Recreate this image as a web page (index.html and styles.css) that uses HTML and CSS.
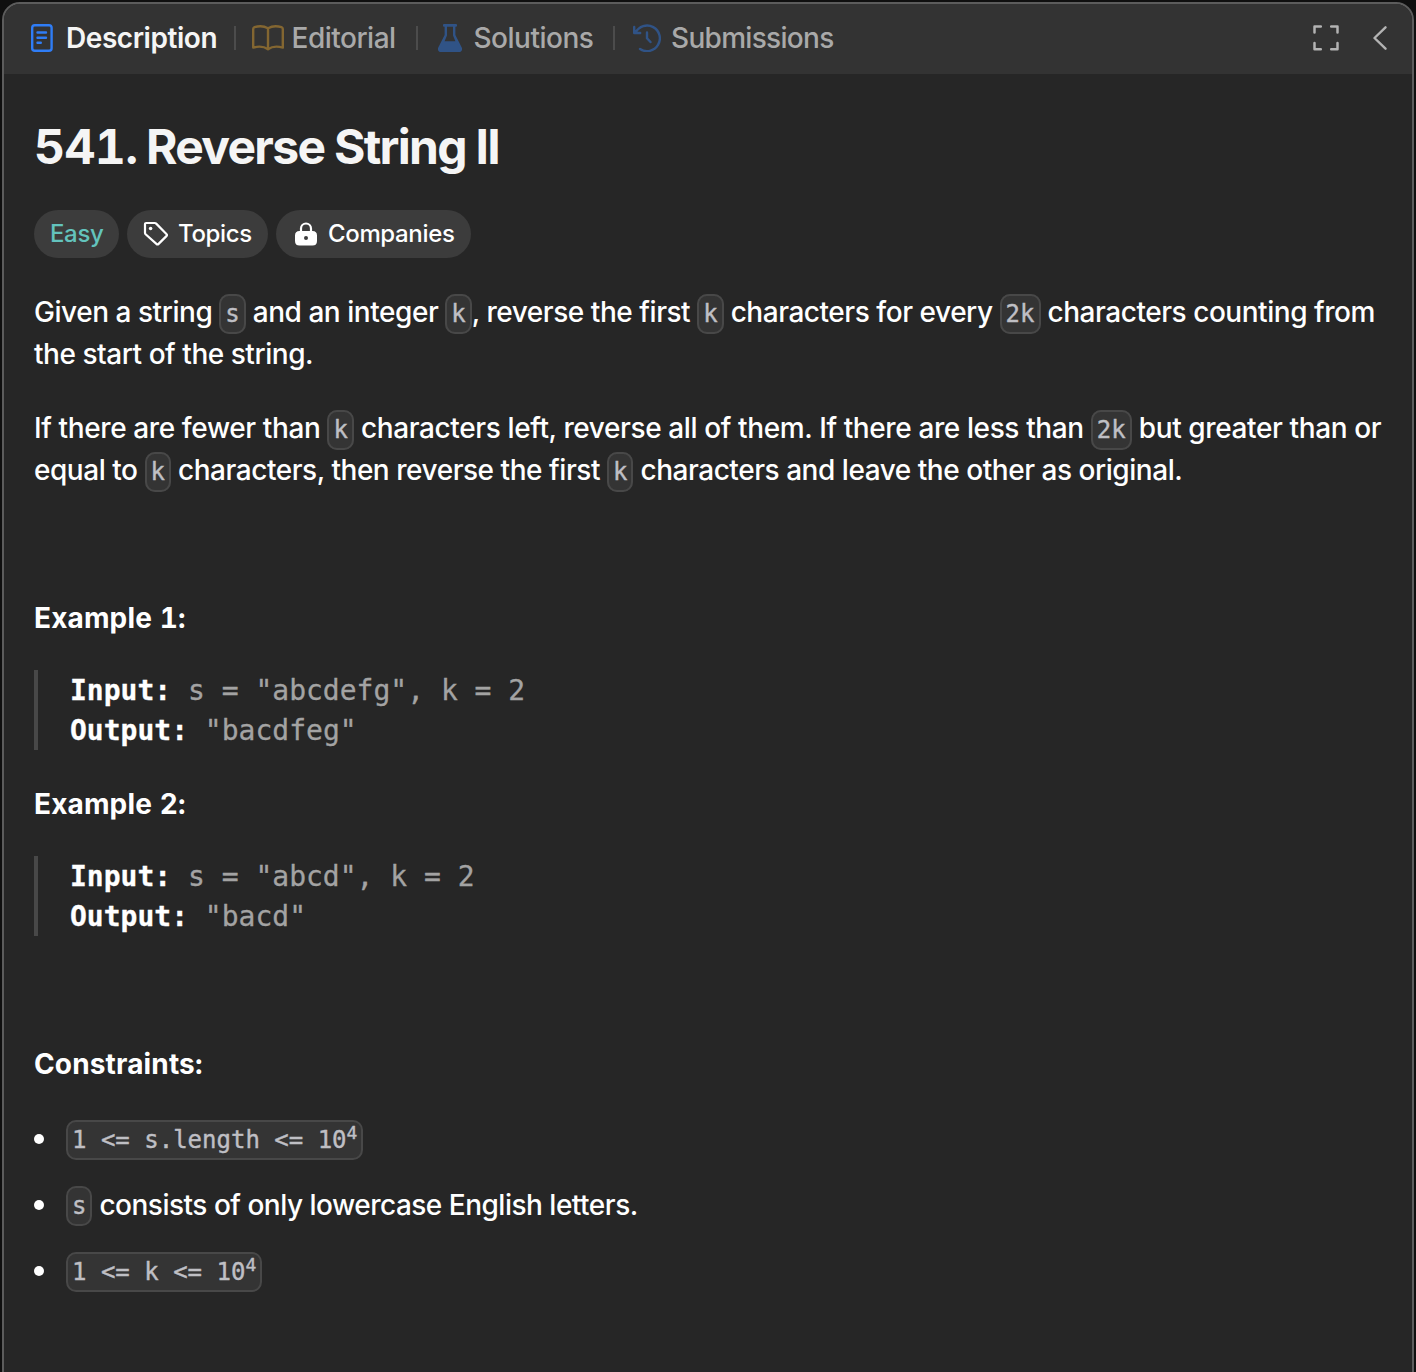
FILE: index.html
```html
<!DOCTYPE html>
<html lang="en">
<head>
<meta charset="utf-8">
<title>541. Reverse String II</title>
<link rel="stylesheet" href="styles.css">
</head>
<body>
<main class="panel">
  <header class="tabbar">
    <nav class="tabs">
      <a class="tab tab-description">
        <svg class="icon" width="22" height="28" viewBox="0 0 22 28" fill="none" stroke="#2f7df6" stroke-width="2.4" stroke-linecap="round" stroke-linejoin="round"><rect x="1.2" y="1.2" width="19.4" height="25.6" rx="2.6"/><path d="M6.500 8.500h8.500M6.500 13.800h8.500M6.500 18.800h3.300"/></svg>
        <span class="label">Description</span>
      </a>
      <i class="divider"></i>
      <a class="tab tab-editorial">
        <svg class="icon" width="32" height="26" viewBox="0 0 32 26" fill="none" stroke="#836631" stroke-width="2.4" stroke-linecap="round" stroke-linejoin="round"><path d="M16 3.200C12.500 1.300 6.500 1 2.500 2.200Q1.200 2.700 1.200 4V22.600C5.500 21.400 12 21.400 16 24.200C20 21.400 26.500 21.400 30.800 22.600V4Q30.800 2.700 29.500 2.200C25.500 1 19.500 1.300 16 3.200V24"/></svg>
        <span class="label">Editorial</span>
      </a>
      <i class="divider"></i>
      <a class="tab tab-solutions">
        <svg class="icon" width="24" height="28" viewBox="0 0 24 28"><path fill="#305386" fill-rule="evenodd" d="M6 0h12a1 1 0 0 1 1 1v.7a1 1 0 0 1-1 1h-.6V11l6.200 12.200C24.900 25.700 23.600 28 21 28H3C.4 28-.9 25.700.4 23.200L6.600 11V2.700H6a1 1 0 0 1-1-1V1a1 1 0 0 1 1-1ZM9 2.700V11.500L6.600 17.200H17.400L15 11.500V2.700Z"/></svg>
        <span class="label">Solutions</span>
      </a>
      <i class="divider"></i>
      <a class="tab tab-submissions">
        <svg class="icon" width="28" height="28" viewBox="0 0 28 28" fill="none" stroke="#305386" stroke-width="2.400" stroke-linecap="round" stroke-linejoin="round"><path d="M2.600 8.600A12.800 12.800 0 1 1 7 25M1.200 3V9H7.200M14 8.500V14.200L17.500 18"/></svg>
        <span class="label">Submissions</span>
      </a>
    </nav>
    <div class="tools">
      <svg class="icon" width="26" height="26" viewBox="0 0 26 26" fill="none" stroke="#b3b3b3" stroke-width="2.500" stroke-linecap="round" stroke-linejoin="round"><path d="M1.500 7.500V1.500H7.800M18.200 1.500H24.500V7.500M24.500 18V24.200H18.200M7.800 24.200H1.500V18"/></svg>
      <svg class="icon" width="14" height="24" viewBox="0 0 14 24" fill="none" stroke="#b3b3b3" stroke-width="2.400" stroke-linecap="round" stroke-linejoin="round"><path d="M12.500 1.300L1.500 12L12.500 22.700"/></svg>
    </div>
  </header>
  <article class="content">
    <h1 class="title"><span class="title-number">541.</span><span>Reverse String II</span></h1>
    <div class="pills">
      <span class="pill pill-easy">Easy</span>
      <span class="pill pill-topics">
        <svg class="icon" width="26" height="26" viewBox="0 0 26 26" fill="none" stroke="#fff" stroke-width="2.200" stroke-linejoin="round"><path d="M2 3.200Q2 2 3.200 2H11.800Q12.600 2 13.200 2.600L23.400 12.900Q24.500 14 23.400 15.100L15.600 22.900Q14.500 24 13.400 22.900L2.600 13.200Q2 12.600 2 11.800Z"/><circle cx="7.600" cy="7.500" r="1.800" fill="#fff" stroke="none"/></svg>
        <span>Topics</span>
      </span>
      <span class="pill pill-companies">
        <svg class="icon" width="22" height="24" viewBox="0 0 22 24"><path d="M6 11V6.500a5 5 0 0 1 10 0V11" fill="none" stroke="#fff" stroke-width="2.200"/><path fill="#fff" fill-rule="evenodd" d="M4.500 9H17.500Q22 9 22 13.500V19Q22 23.500 17.500 23.500H4.500Q0 23.500 0 19V13.500Q0 9 4.500 9ZM11 14a2 2 0 1 0 0 4a2 2 0 1 0 0-4Z"/></svg>
        <span>Companies</span>
      </span>
    </div>
    <p class="text">Given a string <code>s</code> and an integer <code>k</code>, reverse the first <code>k</code> characters for every <code>2k</code> characters counting from<br>the start of the string.</p>
    <p class="text text-second"><span class="loose">If there are fewer than <code>k</code> characters left, reverse all of them. If there are less than <code>2k</code> but greater than or</span><br>equal to <code>k</code> characters, then reverse the first <code>k</code> characters and leave the other as original.</p>
    <h2 class="heading">Example 1:</h2>
    <pre class="example"><b>Input:</b> s = "abcdefg", k = 2
<b>Output:</b> "bacdfeg"</pre>
    <h2 class="heading">Example 2:</h2>
    <pre class="example"><b>Input:</b> s = "abcd", k = 2
<b>Output:</b> "bacd"</pre>
    <h2 class="heading heading-constraints">Constraints:</h2>
    <ul class="constraints">
      <li><code>1 &lt;= s.length &lt;= 10<sup>4</sup></code></li>
      <li><code>s</code><span class="item-text"> consists of only lowercase English letters.</span></li>
      <li><code>1 &lt;= k &lt;= 10<sup>4</sup></code></li>
    </ul>
  </article>
</main>
</body>
</html>
```
FILE: styles.css
```css
* { box-sizing: border-box; }
html, body { margin: 0; height: 1372px; overflow: hidden; }
body {
  background: #0f0f0f;
  padding: 2px 2px 0;
  font-family: Inter, "Liberation Sans", sans-serif;
  font-size: 28px;
  color: #fff;
}
h1, h2, p, pre, ul { margin: 0; padding: 0; }
.icon { display: block; flex: none; }
.panel {
  height: 1390px;
  background: #262626;
  border: 2px solid #5c5c5c;
  border-radius: 18px;
  overflow: hidden;
}
.tabbar {
  height: 70px;
  background: #333;
  display: flex;
  justify-content: space-between;
  align-items: center;
  padding: 0 25px 2px 27px;
}
.tabs { display: flex; align-items: center; }
.tab { display: flex; align-items: center; color: #a9a9a9; white-space: nowrap; }
.label { line-height: 40px; letter-spacing: -0.5px; }
.tab-description { width: 203px; gap: 13px; color: #f5f5f5; font-weight: 600; }
.tab-description .label { letter-spacing: -0.45px; }
.tab-submissions .label { letter-spacing: -0.7px; }
.tab-editorial { width: 164px; gap: 7.500px; margin-left: 16px; }
.tab-solutions { width: 175px; gap: 11.500px; margin-left: 20px; }
.tab-submissions { gap: 10px; margin-left: 18px; }
.tab-editorial, .tab-solutions, .tab-submissions { font-weight: 500; }
.divider { width: 2px; height: 24px; background: #4c4c4c; }
.tools { display: flex; align-items: center; gap: 34px; }
.content { padding: 41px 20px 0 30px; }
.title {
  display: flex;
  gap: 9px;
  font-size: 48px;
  font-weight: 650;
  line-height: 64px;
  letter-spacing: -1.7px;
  color: #f5f5f5;
}
.title-number { width: 103px; letter-spacing: -0.6px; font-variant-numeric: tabular-nums; }
.pills { display: flex; gap: 8px; margin-top: 31px; font-size: 24px; font-weight: 450; letter-spacing: -0.35px; }
.pill {
  height: 48px;
  border-radius: 24px;
  background: #3c3c3c;
  display: flex;
  align-items: center;
  padding: 0 16px;
  line-height: 28px;
  white-space: nowrap;
}
.pill-easy { width: 85px; color: #63c3bd; }
.pill-topics { width: 141px; gap: 9px; }
.pill-companies { width: 195px; padding-left: 19px; gap: 11px; }
.pill > span, .pill-easy { padding-bottom: 1px; }
.text { margin-top: 33px; line-height: 42px; font-weight: 450; letter-spacing: -0.46px; white-space: nowrap; }
.text-second { margin-top: 32px; }
.loose { letter-spacing: -0.39px; }
code {
  font-family: "DejaVu Sans Mono", monospace;
  font-size: 24px;
  font-weight: 400;
  letter-spacing: 0;
  line-height: 24px;
  padding: 4px;
  border: 2px solid #484848;
  border-radius: 10px;
  background: #343434;
  color: #bfbfc4;
  -webkit-text-stroke: 0.4px;
}
.heading { font-size: 28px; line-height: 42px; font-weight: 700; letter-spacing: 0.15px; font-variant-numeric: tabular-nums; }
.text-second + .heading { margin-top: 106px; }
.example {
  font-family: "DejaVu Sans Mono", monospace;
  font-size: 28px;
  line-height: 40px;
  height: 80px;
  color: #a3a3a3;
  -webkit-text-stroke: 0.3px;
  border-left: 4px solid #484848;
  padding: 1px 0 0 32px;
  margin: 31px 0 33px;
}
.example b { color: #fff; }
.heading-constraints { margin-top: 107px; }
.constraints { list-style: none; margin-top: 34px; }
.constraints li { display: flex; align-items: center; height: 42px; margin-bottom: 24px; white-space: pre; }
.constraints li::before { content: ""; width: 10px; height: 10px; border-radius: 50%; background: #fff; margin: 0 22px 2px 0; }
.constraints code { height: 40px; line-height: 28px; }
.item-text { font-weight: 450; letter-spacing: -0.5px; padding-bottom: 3px; }
sup { font-size: 18px; line-height: 0; vertical-align: 9px; }
```
